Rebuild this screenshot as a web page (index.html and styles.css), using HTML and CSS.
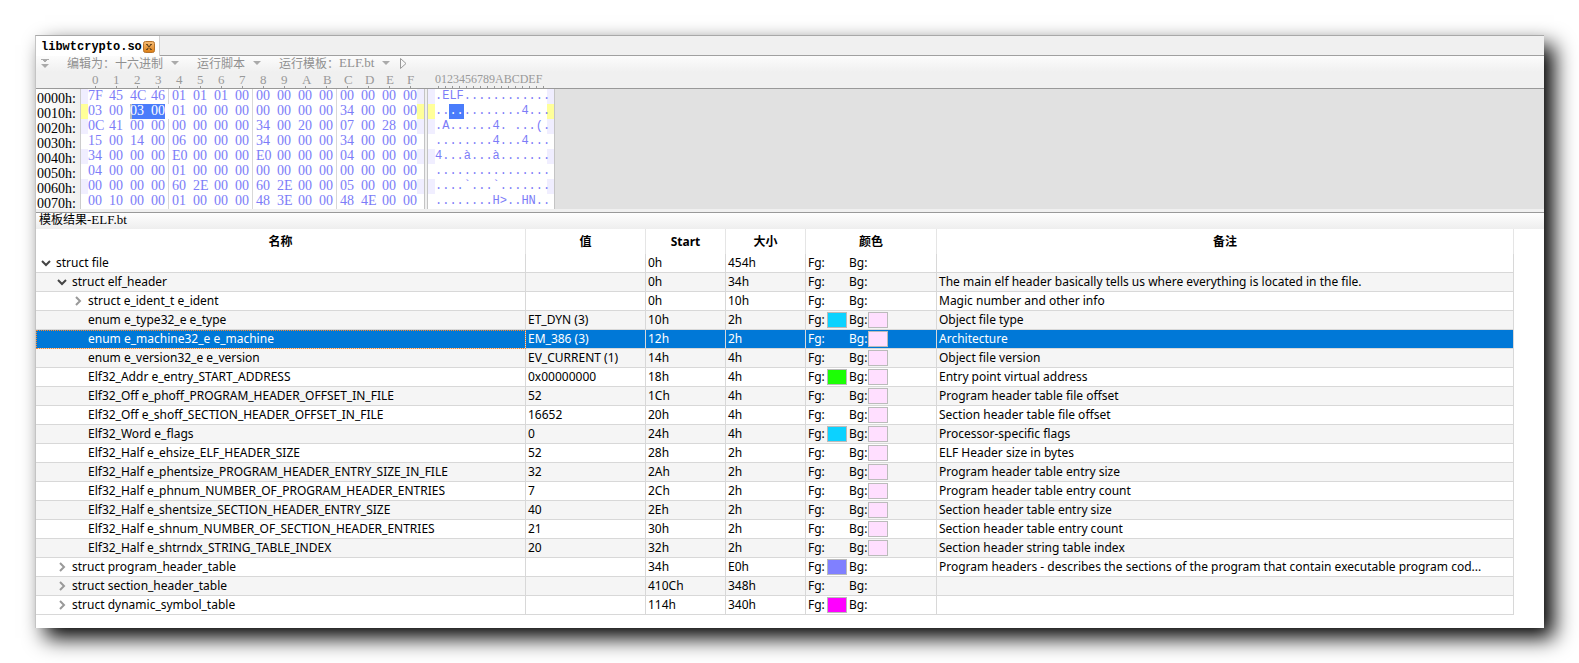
FILE: index.html
```html
<!DOCTYPE html>
<html lang="zh-CN">
<head>
    <meta charset="UTF-8">
    <title>libwtcrypto.so</title>
    <link rel="stylesheet" href="styles.css">
</head>
<body>
<div class="window">

    <div class="tabs">
        <div class="tab">
            <span>libwtcrypto.so</span>
            <button class="close" aria-label="关闭">
                <svg width="12" height="12" viewBox="0 0 12 12">
                    <defs>
                        <linearGradient id="orange" x1="0" y1="0" x2="0" y2="1">
                            <stop offset="0" stop-color="#f6bd78"/>
                            <stop offset="1" stop-color="#dd7d12"/>
                        </linearGradient>
                    </defs>
                    <rect x="0.5" y="0.5" width="11" height="11" rx="2" fill="url(#orange)" stroke="#b5722c"/>
                    <path d="M4 3.5l4 5M8 3.5l-4 5M3 3.5h2M7 3.5h2M3 8.5h2M7 8.5h2" stroke="#6b4a22" stroke-width="1.2"/>
                </svg>
            </button>
        </div>
        <div class="tabs-rest"></div>
    </div>

    <div class="toolbar">
        <button class="more" aria-label="更多">
            <svg width="8" height="9" viewBox="0 0 8 9"><path d="M0 0h8v1H0zM2 1h4v1H5v1H3V2H2zM0 5h8L4 9z" fill="#aaa"/></svg>
        </button>
        <button>编辑为：十六进制<i class="arrow"></i></button>
        <button>运行脚本<i class="arrow"></i></button>
        <button>运行模板：<span class="latin">ELF.bt</span><i class="arrow"></i></button>
        <button class="play" aria-label="运行">
            <svg width="7" height="11" viewBox="0 0 7 11"><path d="M0.5 0.5v10L6 5.5z" fill="none" stroke="#999"/></svg>
        </button>
    </div>

    <table class="hex">
        <colgroup>
            <col class="c-addr"><col class="c-pad">
            <col class="c-byte" span="15"><col class="c-last">
            <col class="c-pad"><col class="c-gap"><col class="c-pad"><col class="c-ascii"><col class="c-pad"><col>
        </colgroup>
        <thead>
        <tr>
            <th></th><th></th>
            <th class="n">0</th><th class="n">1</th><th class="n">2</th><th class="n">3</th><th class="n">4</th><th class="n">5</th><th class="n">6</th><th class="n">7</th><th class="n">8</th><th class="n">9</th><th class="n">A</th><th class="n">B</th><th class="n">C</th><th class="n">D</th><th class="n">E</th><th class="n">F</th>
            <th></th><th></th><th></th><th class="ascii-ruler">0123456789ABCDEF</th><th></th><th></th>
        </tr>
        </thead>
        <tbody>
        <tr>
            <th>0000h:</th><td class="pad"></td>
            <td>7F</td><td>45</td><td>4C</td><td class="div">46</td><td>01</td><td>01</td><td>01</td><td class="div">00</td><td>00</td><td>00</td><td>00</td><td class="div">00</td><td>00</td><td>00</td><td>00</td><td>00</td>
            <td class="pad"></td><td class="gap"></td><td class="pad"></td><td class="ascii">.ELF............</td><td class="pad"></td><td class="rest"></td>
        </tr>
        <tr class="current">
            <th>0010h:</th><td class="pad"></td>
            <td>03</td><td>00</td><td class="sel caret">03</td><td class="sel end">00</td><td>01</td><td>00</td><td>00</td><td class="div">00</td><td>00</td><td>00</td><td>00</td><td class="div">00</td><td>34</td><td>00</td><td>00</td><td>00</td>
            <td class="pad"></td><td class="gap"></td><td class="pad"></td><td class="ascii">..<mark>..</mark>........4...</td><td class="pad"></td><td class="rest"></td>
        </tr>
        <tr>
            <th>0020h:</th><td class="pad"></td>
            <td>0C</td><td>41</td><td>00</td><td class="div">00</td><td>00</td><td>00</td><td>00</td><td class="div">00</td><td>34</td><td>00</td><td>20</td><td class="div">00</td><td>07</td><td>00</td><td>28</td><td>00</td>
            <td class="pad"></td><td class="gap"></td><td class="pad"></td><td class="ascii">.A......4. ...(.</td><td class="pad"></td><td class="rest"></td>
        </tr>
        <tr>
            <th>0030h:</th><td class="pad"></td>
            <td>15</td><td>00</td><td>14</td><td class="div">00</td><td>06</td><td>00</td><td>00</td><td class="div">00</td><td>34</td><td>00</td><td>00</td><td class="div">00</td><td>34</td><td>00</td><td>00</td><td>00</td>
            <td class="pad"></td><td class="gap"></td><td class="pad"></td><td class="ascii">........4...4...</td><td class="pad"></td><td class="rest"></td>
        </tr>
        <tr>
            <th>0040h:</th><td class="pad"></td>
            <td>34</td><td>00</td><td>00</td><td class="div">00</td><td>E0</td><td>00</td><td>00</td><td class="div">00</td><td>E0</td><td>00</td><td>00</td><td class="div">00</td><td>04</td><td>00</td><td>00</td><td>00</td>
            <td class="pad"></td><td class="gap"></td><td class="pad"></td><td class="ascii">4...à...à.......</td><td class="pad"></td><td class="rest"></td>
        </tr>
        <tr>
            <th>0050h:</th><td class="pad"></td>
            <td>04</td><td>00</td><td>00</td><td class="div">00</td><td>01</td><td>00</td><td>00</td><td class="div">00</td><td>00</td><td>00</td><td>00</td><td class="div">00</td><td>00</td><td>00</td><td>00</td><td>00</td>
            <td class="pad"></td><td class="gap"></td><td class="pad"></td><td class="ascii">................</td><td class="pad"></td><td class="rest"></td>
        </tr>
        <tr>
            <th>0060h:</th><td class="pad"></td>
            <td>00</td><td>00</td><td>00</td><td class="div">00</td><td>60</td><td>2E</td><td>00</td><td class="div">00</td><td>60</td><td>2E</td><td>00</td><td class="div">00</td><td>05</td><td>00</td><td>00</td><td>00</td>
            <td class="pad"></td><td class="gap"></td><td class="pad"></td><td class="ascii">....`...`.......</td><td class="pad"></td><td class="rest"></td>
        </tr>
        <tr>
            <th>0070h:</th><td class="pad"></td>
            <td>00</td><td>10</td><td>00</td><td class="div">00</td><td>01</td><td>00</td><td>00</td><td class="div">00</td><td>48</td><td>3E</td><td>00</td><td class="div">00</td><td>48</td><td>4E</td><td>00</td><td>00</td>
            <td class="pad"></td><td class="gap"></td><td class="pad"></td><td class="ascii">........H&gt;..HN..</td><td class="pad"></td><td class="rest"></td>
        </tr>
        </tbody>
    </table>

    <div class="result-title">模板结果<span class="latin">-ELF.bt</span></div>

    <div class="result">
        <table class="tree">
            <colgroup>
                <col class="c-name"><col class="c-value"><col class="c-num"><col class="c-num"><col class="c-color"><col>
            </colgroup>
            <thead>
            <tr><th>名称</th><th>值</th><th>Start</th><th>大小</th><th>颜色</th><th>备注</th></tr>
            </thead>
            <tbody>
            <tr><td class="l0"><svg class="open" viewBox="0 0 10 10"><path d="M1 3l4 4 4-4"/></svg>struct file</td><td></td><td>0h</td><td>454h</td><td><div class="colors"><span>Fg:</span><i></i><span>Bg:</span><i></i></div></td><td></td></tr>
            <tr><td class="l1"><svg class="open" viewBox="0 0 10 10"><path d="M1 3l4 4 4-4"/></svg>struct elf_header</td><td></td><td>0h</td><td>34h</td><td><div class="colors"><span>Fg:</span><i></i><span>Bg:</span><i></i></div></td><td>The main elf header basically tells us where everything is located in the file.</td></tr>
            <tr><td class="l2"><svg viewBox="0 0 10 10"><path d="M3 1l4 4-4 4"/></svg>struct e_ident_t e_ident</td><td></td><td>0h</td><td>10h</td><td><div class="colors"><span>Fg:</span><i></i><span>Bg:</span><i></i></div></td><td>Magic number and other info</td></tr>
            <tr><td class="leaf">enum e_type32_e e_type</td><td>ET_DYN (3)</td><td>10h</td><td>2h</td><td><div class="colors"><span>Fg:</span><i class="cyan"></i><span>Bg:</span><i class="pink"></i></div></td><td>Object file type</td></tr>
            <tr class="selected"><td class="leaf">enum e_machine32_e e_machine</td><td>EM_386 (3)</td><td>12h</td><td>2h</td><td><div class="colors"><span>Fg:</span><i></i><span>Bg:</span><i class="pink"></i></div></td><td>Architecture</td></tr>
            <tr><td class="leaf">enum e_version32_e e_version</td><td>EV_CURRENT (1)</td><td>14h</td><td>4h</td><td><div class="colors"><span>Fg:</span><i></i><span>Bg:</span><i class="pink"></i></div></td><td>Object file version</td></tr>
            <tr><td class="leaf">Elf32_Addr e_entry_START_ADDRESS</td><td>0x00000000</td><td>18h</td><td>4h</td><td><div class="colors"><span>Fg:</span><i class="green"></i><span>Bg:</span><i class="pink"></i></div></td><td>Entry point virtual address</td></tr>
            <tr><td class="leaf">Elf32_Off e_phoff_PROGRAM_HEADER_OFFSET_IN_FILE</td><td>52</td><td>1Ch</td><td>4h</td><td><div class="colors"><span>Fg:</span><i></i><span>Bg:</span><i class="pink"></i></div></td><td>Program header table file offset</td></tr>
            <tr><td class="leaf">Elf32_Off e_shoff_SECTION_HEADER_OFFSET_IN_FILE</td><td>16652</td><td>20h</td><td>4h</td><td><div class="colors"><span>Fg:</span><i></i><span>Bg:</span><i class="pink"></i></div></td><td>Section header table file offset</td></tr>
            <tr><td class="leaf">Elf32_Word e_flags</td><td>0</td><td>24h</td><td>4h</td><td><div class="colors"><span>Fg:</span><i class="cyan"></i><span>Bg:</span><i class="pink"></i></div></td><td>Processor-specific flags</td></tr>
            <tr><td class="leaf">Elf32_Half e_ehsize_ELF_HEADER_SIZE</td><td>52</td><td>28h</td><td>2h</td><td><div class="colors"><span>Fg:</span><i></i><span>Bg:</span><i class="pink"></i></div></td><td>ELF Header size in bytes</td></tr>
            <tr><td class="leaf">Elf32_Half e_phentsize_PROGRAM_HEADER_ENTRY_SIZE_IN_FILE</td><td>32</td><td>2Ah</td><td>2h</td><td><div class="colors"><span>Fg:</span><i></i><span>Bg:</span><i class="pink"></i></div></td><td>Program header table entry size</td></tr>
            <tr><td class="leaf">Elf32_Half e_phnum_NUMBER_OF_PROGRAM_HEADER_ENTRIES</td><td>7</td><td>2Ch</td><td>2h</td><td><div class="colors"><span>Fg:</span><i></i><span>Bg:</span><i class="pink"></i></div></td><td>Program header table entry count</td></tr>
            <tr><td class="leaf">Elf32_Half e_shentsize_SECTION_HEADER_ENTRY_SIZE</td><td>40</td><td>2Eh</td><td>2h</td><td><div class="colors"><span>Fg:</span><i></i><span>Bg:</span><i class="pink"></i></div></td><td>Section header table entry size</td></tr>
            <tr><td class="leaf">Elf32_Half e_shnum_NUMBER_OF_SECTION_HEADER_ENTRIES</td><td>21</td><td>30h</td><td>2h</td><td><div class="colors"><span>Fg:</span><i></i><span>Bg:</span><i class="pink"></i></div></td><td>Section header table entry count</td></tr>
            <tr><td class="leaf">Elf32_Half e_shtrndx_STRING_TABLE_INDEX</td><td>20</td><td>32h</td><td>2h</td><td><div class="colors"><span>Fg:</span><i></i><span>Bg:</span><i class="pink"></i></div></td><td>Section header string table index</td></tr>
            <tr><td class="l1"><svg viewBox="0 0 10 10"><path d="M3 1l4 4-4 4"/></svg>struct program_header_table</td><td></td><td>34h</td><td>E0h</td><td><div class="colors"><span>Fg:</span><i class="violet"></i><span>Bg:</span><i></i></div></td><td>Program headers - describes the sections of the program that contain executable program cod...</td></tr>
            <tr><td class="l1"><svg viewBox="0 0 10 10"><path d="M3 1l4 4-4 4"/></svg>struct section_header_table</td><td></td><td>410Ch</td><td>348h</td><td><div class="colors"><span>Fg:</span><i></i><span>Bg:</span><i></i></div></td><td></td></tr>
            <tr><td class="l1"><svg viewBox="0 0 10 10"><path d="M3 1l4 4-4 4"/></svg>struct dynamic_symbol_table</td><td></td><td>114h</td><td>340h</td><td><div class="colors"><span>Fg:</span><i class="magenta"></i><span>Bg:</span><i></i></div></td><td></td></tr>
            </tbody>
        </table>
    </div>

</div>
</body>
</html>
```
FILE: styles.css
```css
* {
    box-sizing: border-box;
    margin: 0;
    padding: 0;
}

body {
    background-color: #fff;
    font: 12px/16px "Noto Sans", "Noto Sans CJK SC", sans-serif;
    color: #000;
}

button {
    border: 0;
    background: none;
    font: inherit;
    color: inherit;
}

table {
    border-spacing: 0;
    table-layout: fixed;
    width: 100%;
}

.window {
    margin: 35px;
    border-top: 1px solid #a8a8a8;
    border-left: 1px solid #c4c4c4;
    background-color: #fff;
    box-shadow: 10px 10px 20px #000;
}

.latin {
    font: 13px/14px "Liberation Serif", serif;
}

/* 标签栏 */
.tabs {
    display: flex;
    height: 20px;
    background-color: #f0f0f0;
}

.tab {
    display: flex;
    align-items: center;
    gap: 1px;
    padding: 1px 4px 0 5px;
    border-right: 1px solid #d0d0d0;
    background-color: #fff;
    font: bold 12px/18px "Liberation Mono", monospace;
}

.tabs-rest {
    flex: 1;
    border-bottom: 1px solid #a0a0a0;
}

.close,
.close svg {
    display: block;
}

/* 工具栏 */
.toolbar {
    display: flex;
    align-items: center;
    gap: 18px;
    height: 16px;
    padding: 0 5px 2px;
    background: linear-gradient(#fcfcfc, #f0f0f0);
    color: #909090;
}

.toolbar button {
    display: flex;
    align-items: center;
    font-family: "Noto Sans CJK SC", sans-serif;
    line-height: 14px;
}

.toolbar .play {
    margin-left: -8px;
}

.arrow {
    margin-left: 8px;
    border: 4px solid transparent;
    border-top-color: #aaa;
    border-bottom: 0;
}

/* 十六进制区域 */
.hex {
    background-color: #fff;
    color: #7c7cf8;
    font: 14px/13px "Liberation Serif", serif;
}

.c-addr { width: 45px; }
.c-pad { width: 7px; }
.c-byte { width: 21px; }
.c-last { width: 14px; }
.c-gap { width: 4px; }
.c-ascii { width: 112px; }

.hex tr {
    height: 15px;
}

.hex th {
    font-weight: normal;
    text-align: left;
}

.hex td {
    padding-bottom: 2px;
}

.hex thead th {
    height: 17px;
    padding-bottom: 2px;
    border-bottom: 1px solid #999;
    background-color: #f0f0f0;
    color: #999;
    font-size: 13px;
}

.hex thead .n {
    padding-left: 4px;
    background: linear-gradient(#999, #999) 7px 100% / 1px 2px no-repeat #f0f0f0;
}

.hex thead .ascii-ruler {
    font-size: 12px;
    background: repeating-linear-gradient(90deg, transparent 0 3px, #999 3px 4px, transparent 4px 7px) 0 100% / 100% 2px no-repeat #f0f0f0;
}

.hex tbody th {
    padding: 5px 0 0 1px;
    border-right: 1px solid #ccc;
    background: linear-gradient(90deg, #fff, #f0f0f0);
    color: #000;
    line-height: 10px;
}

.hex .div {
    background: linear-gradient(#d8d8d8, #d8d8d8) 17px 0 / 1px 100% no-repeat;
}

.hex tr:nth-child(odd) .pad {
    background-color: #f0eeff;
}

.hex .current .pad {
    background-color: #ffff99;
}

.hex .gap {
    border: 1px solid #c4c4c4;
    border-width: 0 1px;
    background-color: #f0f0f0;
}

.hex .ascii {
    padding: 0;
    font: 12px/15px "Liberation Mono", monospace;
    white-space: pre;
}

.hex .rest {
    border-left: 1px solid #c4c4c4;
    background-color: #e1e1e1;
}

.hex .sel {
    background-color: #4a7cfb;
    color: #fff;
}

.hex .caret {
    border-left: 2px solid #bbb;
    text-indent: -2px;
}

.hex .end {
    background: linear-gradient(#4a7cfb, #4a7cfb) 0 0 / 14px 100% no-repeat;
}

.hex mark {
    display: inline-block;
    background-color: #4a7cfb;
    color: #fff;
}

/* 模板结果 */
.result-title {
    height: 20px;
    padding: 0 3px;
    border-top: 3px solid #f0f0f0;
    background: linear-gradient(#999, #999) 0 0 / 100% 1px no-repeat, linear-gradient(#fff, #eee);
    font-family: "Noto Sans CJK SC", sans-serif;
    line-height: 14px;
}

.result {
    padding: 0 30px 13px 0;
}

.c-name { width: 490px; }
.c-value { width: 120px; }
.c-num { width: 80px; }
.c-color { width: 131px; }

.tree th {
    height: 25px;
    border-right: 1px solid #e5e5e5;
}

.tree td {
    height: 19px;
    padding: 0 2px;
    border-right: 1px solid #d8d8d8;
    border-bottom: 1px solid #d8d8d8;
    line-height: 18px;
    white-space: nowrap;
}

.tree tbody tr:nth-child(even) {
    background-color: #f5f5f5;
}

.tree .l0 { padding-left: 5px; }
.tree .l1 { padding-left: 21px; }
.tree .l2 { padding-left: 37px; }
.tree .leaf { padding-left: 52px; }

.tree svg {
    width: 10px;
    height: 10px;
    margin-right: 5px;
    vertical-align: -1px;
    fill: none;
    stroke: #999;
    stroke-width: 2;
}

.tree .open {
    stroke: #444;
}

.tree tbody .selected {
    background-color: #0078d7;
    color: #fff;
}

.selected .leaf {
    outline: 1px dotted #ff8728;
    outline-offset: -1px;
}

.colors {
    display: grid;
    grid-template-columns: 19px 22px 19px 20px;
    align-items: center;
}

.colors i {
    width: 20px;
    height: 16px;
}

.colors .cyan,
.colors .green,
.colors .pink,
.colors .violet,
.colors .magenta {
    border: 1px solid #bbb;
}

.cyan { background-color: #0cd2ff; }
.green { background-color: #1cff05; }
.pink { background-color: #ffdfff; }
.violet { background-color: #8080ff; }
.magenta { background-color: #ff00ff; }
```
